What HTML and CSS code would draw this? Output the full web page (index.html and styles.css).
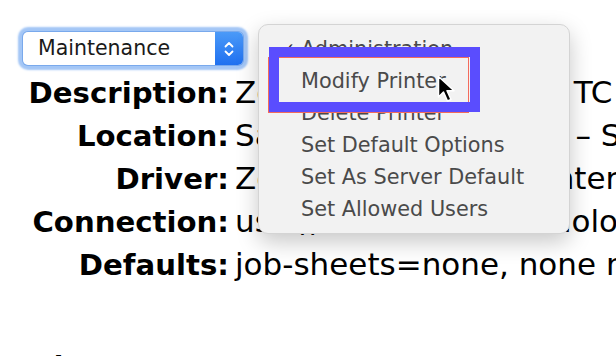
FILE: index.html
```
<!DOCTYPE html>
<html lang="en">
<head>
  <meta charset="UTF-8">
  <title>Printer - Maintenance</title>
  <link rel="stylesheet" href="styles.css">
</head>
<body>

  <div class="page">
    <div class="select">
      <span class="select-label">Maintenance</span>
      <span class="stepper">
        <svg width="12" height="20" viewBox="0 0 12 20">
          <path d="M2.5 7.5 L6 4 L9.5 7.5" fill="none" stroke="#fff" stroke-width="1.8" stroke-linecap="round" stroke-linejoin="round"/>
          <path d="M2.5 12.5 L6 16 L9.5 12.5" fill="none" stroke="#fff" stroke-width="1.8" stroke-linecap="round" stroke-linejoin="round"/>
        </svg>
      </span>
    </div>

    <dl class="info">
      <dt>Description:</dt>
      <dd>Zebra TLP2844 Label TC</dd>
      <dt>Location:</dt>
      <dd>Sales Office, Floor 2B – Shipping</dd>
      <dt>Driver:</dt>
      <dd>Zebra EPL2 Label Printer</dd>
      <dt>Connection:</dt>
      <dd>usb://Zebra%20Technologies/ZTC%20TLP2844</dd>
      <dt>Defaults:</dt>
      <dd>job-sheets=none, none media=w288h432</dd>
    </dl>

    <h2 class="section">Jobs</h2>
  </div>

  <!-- popup menu of the select -->
  <ul class="menu">
    <li class="checked">Administration</li>
    <li>Modify Printer</li>
    <li>Delete Printer</li>
    <li>Set Default Options</li>
    <li>Set As Server Default</li>
    <li>Set Allowed Users</li>
  </ul>

  <!-- annotation boxes -->
  <div class="mark-red"></div>
  <div class="mark"></div>

  <svg class="cursor" width="20" height="28" viewBox="0 0 20 28">
    <path d="M1.5 1.5 L1.5 22 L6.5 17 L10.5 26 L14 24.5 L10 15.8 L17 15.8 Z" fill="#000" stroke="#fff" stroke-width="1.5" stroke-linejoin="round"/>
  </svg>

</body>
</html>
```

FILE: styles.css
```
html, body {
  margin: 0;
  background: #fff;
  overflow: hidden;
}

body {
  width: 616px;
  height: 356px;
  position: relative;
  font-family: "DejaVu Sans", Verdana, sans-serif;
  color: #000;
}

.page {
  padding-top: 32px;
  white-space: nowrap;
}

/* select box with focus ring */
.select {
  display: flex;
  align-items: stretch;
  width: 220px;
  height: 33px;
  margin-left: 23px;
  background: #fff;
  border-radius: 5px;
  box-shadow: 0 0 0 1px #79a9ec, 0 0 2px 5px #a3c6f6;
}

.select-label {
  flex: 1;
  padding-left: 15px;
  font-size: 20.5px;
  line-height: 33px;
  color: #1a1a1a;
}

.stepper {
  width: 28px;
  display: flex;
  align-items: center;
  justify-content: center;
  background: linear-gradient(#4b9af8, #1f70f0);
  border-radius: 0 5px 5px 0;
}

/* description list */
.info {
  display: grid;
  grid-template-columns: 229px auto;
  grid-auto-rows: 43px;
  align-items: baseline;
  column-gap: 6px;
  margin: 6px 0 0 0;
  line-height: 43px;
}

.info dt {
  font-size: 29.2px;
  font-weight: bold;
  text-align: right;
}

.info dd {
  margin: 0;
  font-size: 31px;
}

.section {
  margin: 65px 0 0 24px;
  font-size: 28px;
  line-height: 34px;
}

/* popup menu */
.menu {
  position: absolute;
  left: 258px;
  top: 24px;
  width: 312px;
  margin: 0;
  padding: 8px 0;
  list-style: none;
  background: #f2f2f2;
  border: 1px solid #d4d4d4;
  border-radius: 10px;
  box-shadow: 0 8px 22px rgba(0,0,0,0.22);
  box-sizing: border-box;
}

.menu li {
  height: 32px;
  line-height: 32px;
  padding-left: 42px;
  font-size: 20.8px;
  color: #4a4a4a;
  position: relative;
}

.menu li.checked::before {
  content: "✓";
  position: absolute;
  left: 22px;
  font-size: 17px;
  color: #333;
}

/* annotation */
.mark-red {
  position: absolute;
  left: 268px;
  top: 57px;
  width: 199px;
  height: 54px;
  border: 1px solid #f36b5c;
}

.mark {
  position: absolute;
  left: 269px;
  top: 47px;
  width: 191px;
  height: 45px;
  border: 10px solid #5a4dfe;
}

.cursor {
  position: absolute;
  left: 437px;
  top: 75px;
}
```
